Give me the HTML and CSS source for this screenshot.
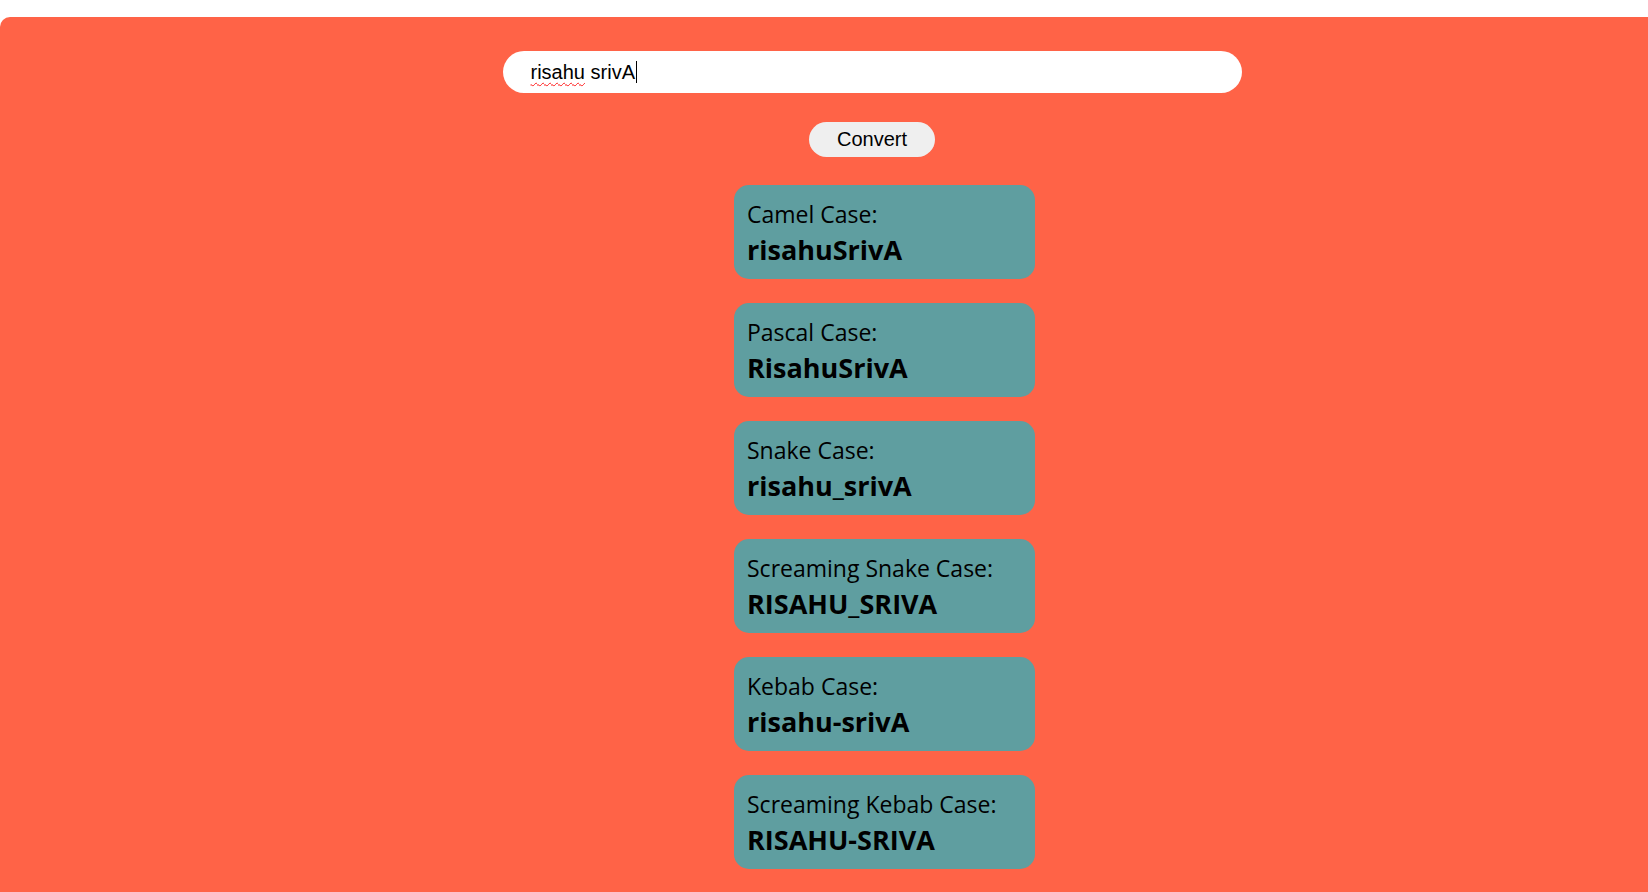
FILE: index.html
```html
<!DOCTYPE html>
<html lang="en">
<head>
<meta charset="utf-8">
<title>Case Converter</title>
<link rel="stylesheet" href="styles.css">
</head>
<body>
<main class="panel">
  <div class="text-input" role="textbox" aria-label="Text to convert"><span class="misspelled">risahu</span> srivA<span class="caret"></span></div>
  <button class="convert-btn" type="button">Convert</button>
  <section class="results">
    <div class="card">
      <div class="card-label">Camel Case:</div>
      <div class="card-value">risahuSrivA</div>
    </div>
    <div class="card">
      <div class="card-label">Pascal Case:</div>
      <div class="card-value">RisahuSrivA</div>
    </div>
    <div class="card">
      <div class="card-label">Snake Case:</div>
      <div class="card-value">risahu_srivA</div>
    </div>
    <div class="card">
      <div class="card-label">Screaming Snake Case:</div>
      <div class="card-value">RISAHU_SRIVA</div>
    </div>
    <div class="card">
      <div class="card-label">Kebab Case:</div>
      <div class="card-value">risahu-srivA</div>
    </div>
    <div class="card">
      <div class="card-label">Screaming Kebab Case:</div>
      <div class="card-value">RISAHU-SRIVA</div>
    </div>
  </section>
</main>
</body>
</html>
```

FILE: styles.css
```css
html, body {
  margin: 0;
  padding: 0;
  background: #ffffff;
  overflow: hidden;
}

.panel {
  margin-top: 17px;
  min-height: 900px;
  background: #ff6347;
  border-radius: 10px 0 0 0;
  display: flex;
  flex-direction: column;
  align-items: center;
  padding: 34px 0 0 96px;
  box-sizing: border-box;
}

.text-input {
  width: 739px;
  height: 42px;
  box-sizing: border-box;
  background: #ffffff;
  border-radius: 21px;
  padding: 0 28px;
  display: flex;
  align-items: center;
  font-family: "Liberation Sans", Arial, sans-serif;
  font-size: 20px;
  color: #000000;
  white-space: pre;
}

.misspelled {
  text-decoration: underline wavy #ff1a1a;
  text-decoration-thickness: 1px;
  text-underline-offset: 3px;
}

.caret {
  display: inline-block;
  width: 1px;
  height: 22px;
  background: #000000;
  margin-left: 1px;
}

.convert-btn {
  margin-top: 29px;
  width: 126px;
  height: 35px;
  border: none;
  border-radius: 18px;
  background: #efefef;
  font-family: "Liberation Sans", Arial, sans-serif;
  font-size: 20px;
  color: #000000;
  padding: 0;
}

.results {
  margin-top: 28px;
  margin-left: 25px;
  display: flex;
  flex-direction: column;
  gap: 24px;
}

.card {
  width: 301px;
  height: 94px;
  box-sizing: border-box;
  background: #5f9ea0;
  border-radius: 15px;
  padding: 13px 13px 0 13px;
  font-family: "Open Sans", "Noto Sans", sans-serif;
  color: #000000;
}

.card-label {
  font-size: 23px;
  line-height: 32px;
}

.card-value {
  font-size: 27px;
  font-weight: 700;
  line-height: 40px;
}
```
